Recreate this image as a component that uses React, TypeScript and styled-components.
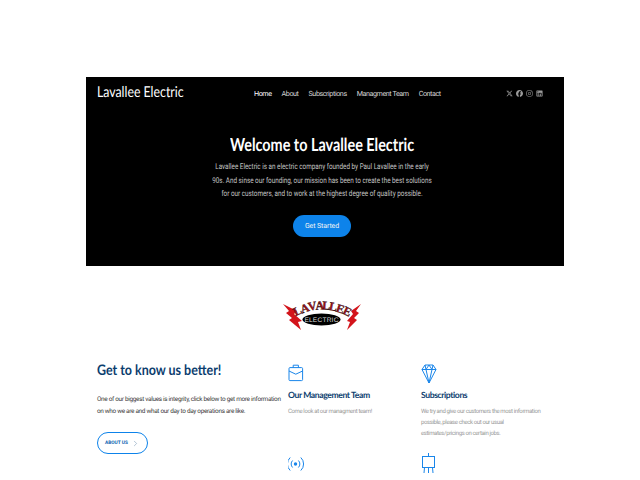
import React from "react";
import styled, { createGlobalStyle } from "styled-components";
import { ChevronRight } from "lucide-react";
import { FaXTwitter, FaFacebook, FaInstagram, FaLinkedin } from "react-icons/fa6";

const Global = createGlobalStyle`
  html, body { margin: 0; padding: 0; background: #fff; height: 480px; overflow: hidden; }
  body { font-family: Roboto, "Liberation Sans", sans-serif; text-rendering: geometricPrecision; }
`;

const Page = styled.div`
  width: 478px;
  margin-left: 86px;
  padding-top: 77px;
`;

const Hero = styled.section`
  height: 189px;
  background: #000;
  display: flex;
  flex-direction: column;
  color: #fff;
  overflow: hidden;
`;

const Nav = styled.header`
  display: flex;
  align-items: center;
  height: 30px;
  padding: 0 21px 0 11px;
`;

const Brand = styled.div`
  width: 157px;
  font-family: Lato, sans-serif;
  font-size: 15px;
  line-height: 30px;
  color: #fff;
  white-space: nowrap;
  transform: scaleX(0.82);
  transform-origin: left center;
`;

const Menu = styled.nav`
  display: flex;
  gap: 10px;
  padding-top: 2px;
`;

const MenuItem = styled.a<{ $active?: boolean }>`
  font-size: 7.2px;
  letter-spacing: -0.44px;
  color: ${(p) => (p.$active ? "#fff" : "#d6d6d6")};
`;

const Socials = styled.div`
  display: flex;
  margin-left: auto;
  gap: 3px;
  color: #9c9c9c;
  font-size: 7px;
  padding-top: 2px;
`;

const HeroBody = styled.div`
  display: flex;
  flex-direction: column;
  align-items: center;
  padding: 27px 6px 0 0;
`;

const HeroTitle = styled.h1`
  margin: 0;
  font-family: Lato, sans-serif;
  font-size: 18px;
  line-height: 20px;
  font-weight: 700;
  color: #fff;
  white-space: nowrap;
  transform: scaleX(0.8);
`;

const HeroText = styled.p`
  margin: 6px 0 0;
  width: 280px;
  flex: none;
  text-align: center;
  font-size: 8px;
  line-height: 13.5px;
  color: #c4c4c4;
  transform: scaleX(0.79);
`;

const Cta = styled.a`
  margin-top: 14px;
  width: 58px;
  height: 22px;
  border-radius: 11px;
  background: #0d83ea;
  color: #f4f4f4;
  font-size: 7px;
  letter-spacing: -0.1px;
  display: flex;
  align-items: center;
  justify-content: center;
`;

const LogoRow = styled.div`
  display: flex;
  justify-content: center;
  padding: 33px 6px 0 0;
  height: 34px;
`;

const Features = styled.section`
  display: grid;
  grid-template-columns: 191px 133px 1fr;
  padding: 31px 11px 0;
`;

const Intro = styled.div``;

const IntroTitle = styled.h2`
  margin: -2px 0 0;
  font-family: Lato, sans-serif;
  font-weight: 700;
  font-size: 14.5px;
  line-height: 18px;
  color: #0b3d6e;
  white-space: nowrap;
  transform: scaleX(0.86);
  transform-origin: left center;
`;

const IntroText = styled.p`
  margin: 13px 0 0;
  width: 189px;
  font-size: 6.4px;
  letter-spacing: -0.3px;
  line-height: 12px;
  color: #3a3a3a;
`;

const Outline = styled.a`
  margin-top: 15px;
  width: 51px;
  height: 22px;
  box-sizing: border-box;
  border: 1px solid #0d83ea;
  border-radius: 11px;
  display: flex;
  align-items: center;
  justify-content: center;
  gap: 3px;
  font-size: 4.8px;
  font-weight: 700;
  color: #0b5fb0;
  svg { color: #5a7fa4; }
`;

const Card = styled.article`
  display: flex;
  flex-direction: column;
  align-items: flex-start;
  color: #1a86ea;
`;

const CardGrid = styled.div`
  display: grid;
  grid-template-rows: 89px auto;
`;

const CardTitle = styled.h3`
  margin: 5px 0 0;
  font-family: Lato, sans-serif;
  font-size: 8.6px;
  line-height: 12px;
  font-weight: 700;
  letter-spacing: -0.4px;
  color: #0b3d6e;
  white-space: nowrap;
`;

const CardText = styled.p`
  margin: 5px 0 0;
  width: 121px;
  font-size: 6px;
  letter-spacing: -0.38px;
  line-height: 11px;
  color: #989898;
`;

const links = ["Home", "About", "Subscriptions", "Managment Team", "Contact"];

const Ico = styled.svg`
  display: block;
  width: 16px;
  height: 20px;
  fill: none;
  stroke: currentColor;
  stroke-width: 1;
`;

function CaseIcon() {
  return (
    <Ico viewBox="0 0 16 20">
      <rect x="1" y="3.6" width="13.6" height="13" rx="1" />
      <path d="M5.2 3.6V1.2h5.2v2.4" />
      <path d="M1 7 7.8 10.2 14.6 7" />
    </Ico>
  );
}

function GemIcon() {
  return (
    <Ico viewBox="0 0 16 20">
      <path d="M4 1h8l3 4.5L8 19 1 5.5z" />
      <path d="M1 5.5h14M5 5.5 8 19l3-13.5M4 1l1 4.5L8 1l3 4.5L12 1" />
    </Ico>
  );
}

function RadioIcon() {
  return (
    <Ico viewBox="0 0 16 20">
      <circle cx="7.5" cy="11" r="1.7" fill="currentColor" stroke="none" />
      <path d="M4.6 7.5a5 5 0 0 0 0 7M10.4 7.5a5 5 0 0 1 0 7" />
      <path d="M2.2 4.5a9 9 0 0 0 0 13M12.8 4.5a9 9 0 0 1 0 13" />
    </Ico>
  );
}

function BoardIcon() {
  return (
    <Ico viewBox="0 0 16 20">
      <path d="M7.5 0v3.5" />
      <rect x="1.5" y="3.5" width="12" height="11" />
      <path d="M3.5 14.5 3 20M7.5 14.5V20M11.5 14.5l.5 5.5" />
    </Ico>
  );
}

const logoLetters = [
  { c: "L", x: 17, y: 15.5, r: -26 },
  { c: "A", x: 24, y: 13, r: -19 },
  { c: "V", x: 31, y: 11, r: -11 },
  { c: "A", x: 38, y: 10.5, r: -4 },
  { c: "L", x: 44, y: 10.5, r: 4 },
  { c: "L", x: 50.5, y: 11.5, r: 11 },
  { c: "E", x: 57, y: 13.5, r: 19 },
  { c: "E", x: 63.5, y: 16, r: 26 },
];

function Logo() {
  return (
    <svg width="80" height="34" viewBox="0 0 80 34">
      <g transform="translate(0 -2)">
        <polygon points="1,7 15,14 12,17 20,24 16,25 19,33 7,23 10,21 4,16 7,14" fill="#d3141b" />
        <polygon points="79,7 69,14 71,17 65,24 68,25 65,33 75,23 72,21 77,16 74,14" fill="#d3141b" />
      </g>
      <g fontFamily="'Liberation Serif', serif" fontWeight="700" fontSize="12" fill="#a5141a" stroke="#000" strokeWidth="0.3" textAnchor="middle">
        {logoLetters.map((l, i) => (
          <text key={i} x={l.x} y={l.y} transform={`rotate(${l.r} ${l.x} ${l.y})`}>{l.c}</text>
        ))}
      </g>
      <ellipse cx="39.5" cy="20.5" rx="19" ry="6" fill="#000" />
      <text x="39.5" y="22.9" textAnchor="middle" fontFamily="'Liberation Sans', sans-serif" fontSize="6.6" fill="#ddd" letterSpacing="0.2">ELECTRIC</text>
    </svg>
  );
}

export default function App() {
  return (
    <>
      <Global />
      <Page>
        <Hero>
          <Nav>
            <Brand>Lavallee Electric</Brand>
            <Menu>
              {links.map((l, i) => (
                <MenuItem key={l} $active={i === 0}>{l}</MenuItem>
              ))}
            </Menu>
            <Socials>
              <FaXTwitter />
              <FaFacebook />
              <FaInstagram />
              <FaLinkedin />
            </Socials>
          </Nav>
          <HeroBody>
            <HeroTitle>Welcome to Lavallee Electric</HeroTitle>
            <HeroText>
              Lavallee Electric is an electric company founded by Paul Lavallee in the early 90s. And sinse our founding, our mission has been to create the best solutions for our customers, and to work at the highest degree of quality possible.
            </HeroText>
            <Cta>Get Started</Cta>
          </HeroBody>
        </Hero>
        <LogoRow><Logo /></LogoRow>
        <Features>
          <Intro>
            <IntroTitle>Get to know us better!</IntroTitle>
            <IntroText>
              One of our biggest values is integrity, click below to get more information on who we are and what our day to day operations are like.
            </IntroText>
            <Outline>ABOUT US <ChevronRight size={9} strokeWidth={1.2} /></Outline>
          </Intro>
          <CardGrid>
            <Card>
              <CaseIcon />
              <CardTitle>Our Management Team</CardTitle>
              <CardText>Come look at our managment team!</CardText>
            </Card>
            <Card><RadioIcon /></Card>
          </CardGrid>
          <CardGrid>
            <Card>
              <GemIcon />
              <CardTitle>Subscriptions</CardTitle>
              <CardText>
                We try and give our customers the most information possible, please check out our usual estimates/pricings on certain jobs.
              </CardText>
            </Card>
            <Card><BoardIcon /></Card>
          </CardGrid>
        </Features>
      </Page>
    </>
  );
}
